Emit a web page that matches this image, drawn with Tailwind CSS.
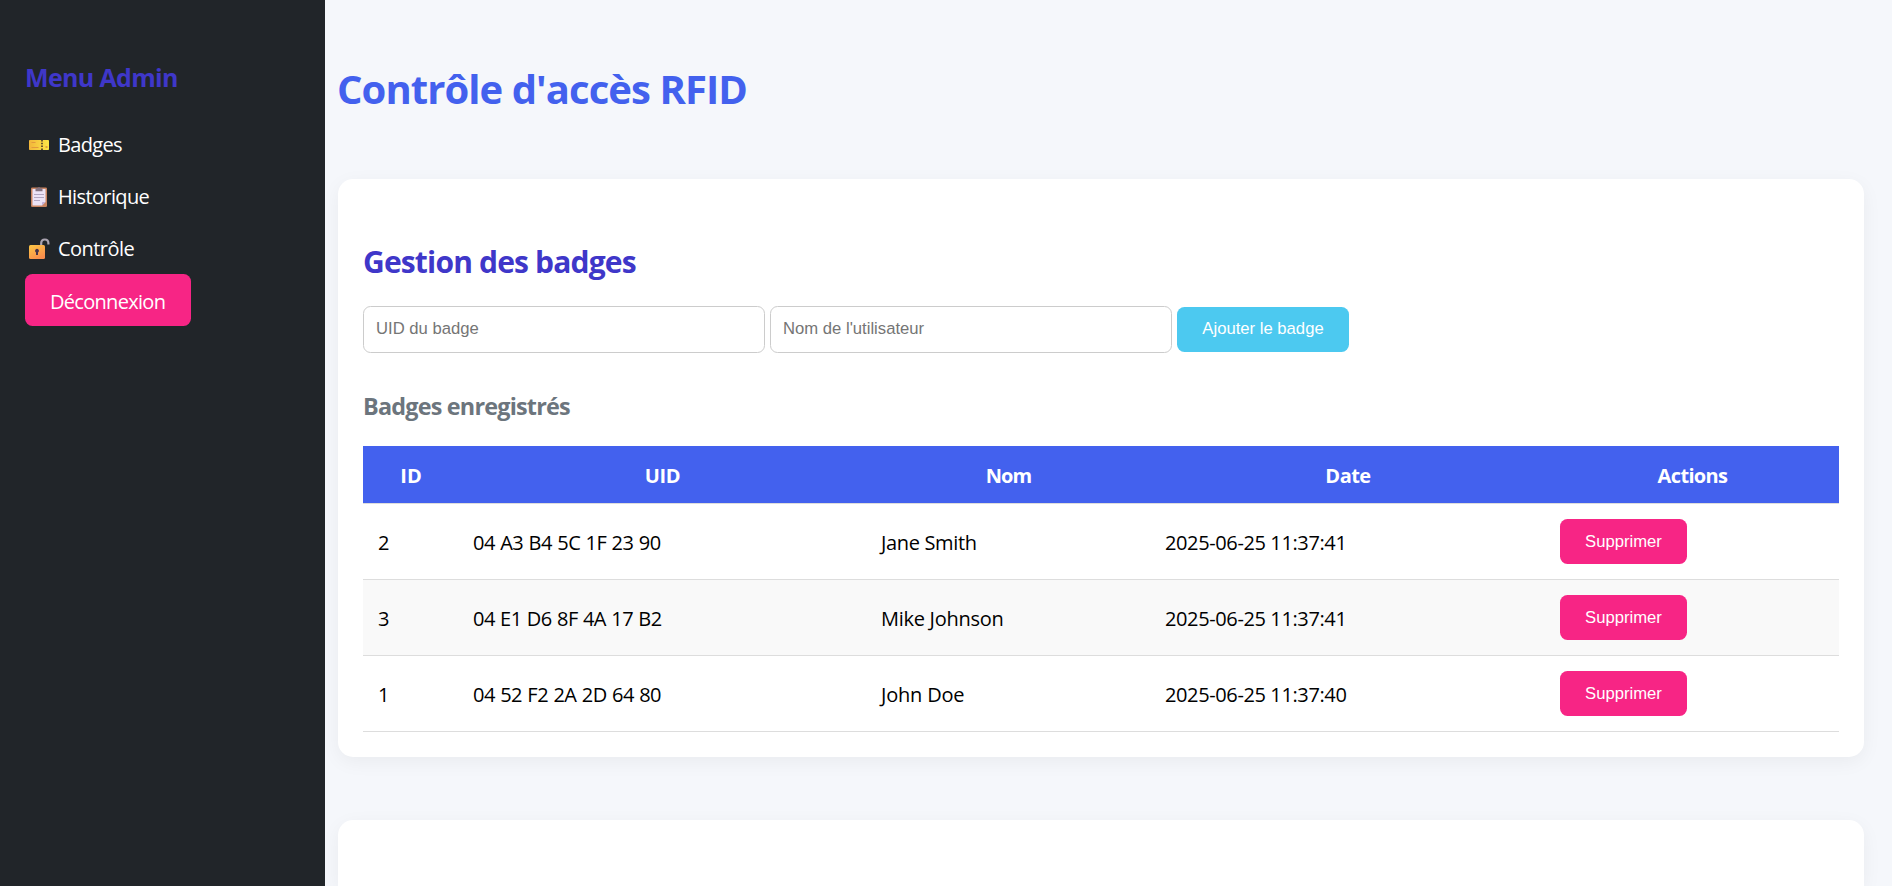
<!DOCTYPE html>
<html lang="fr">
<head>
<meta charset="utf-8">
<title>Contrôle d'accès RFID</title>
<script src="https://cdn.jsdelivr.net/npm/@tailwindcss/browser@4"></script>
</head>
<body class="flex h-screen overflow-hidden bg-[#f5f7fb] font-['Open_Sans',sans-serif] text-[20px] text-black">
<aside class="w-[325px] shrink-0 bg-[#212529] px-[25px] pt-[60px] text-white">
  <h3 class="mb-[24px] text-[25px] leading-[34px] font-bold text-[#3f37c9]"><span class="tracking-[-0.65px]">Menu Admin</span></h3>
  <nav class="flex flex-col leading-[52px]">
    <a class="flex h-[52px] items-center pt-[2px]">
      <svg class="ml-[3px] mr-[8px] size-[22px]" viewBox="0 0 22 22">
        <defs><linearGradient id="tk" x1="0" x2="1"><stop offset="0" stop-color="#f2b63a"/><stop offset="1" stop-color="#fde747"/></linearGradient></defs>
        <path d="M1.8 6h18.4q.8 0 .8.8v8.4q0 .8-.8.8H1.8q-.8 0-.8-.8V6.800q0-.8.8-.8z" fill="url(#tk)"/>
        <path d="M3.500 8.500h4M3.500 13.500h7" stroke="#e39a3c" stroke-width="1"/><path d="M17.500 13h2" stroke="#e39a3c" stroke-width="1.800"/>
        <path d="M14 6v10" stroke="#3b3027" stroke-width="1.500" stroke-dasharray="1.500 1.300"/>
      </svg><span class="tracking-[-0.67px]">Badges</span></a>
    <a class="flex h-[52px] items-center pt-[2px]">
      <svg class="ml-[3px] mr-[8px] size-[22px]" viewBox="0 0 22 22">
        <rect x="3" y="1.500" width="16" height="19.500" rx="1.300" fill="#c98460"/>
        <path d="M4.500 3h13v13L14 19.500H4.500z" fill="#ece3f6"/><path d="M17.500 16h-2.700q-.8 0-.8.8v2.700z" fill="#c3b1d6"/>
        <path d="M7.500 5.300V3q0-.8.8-.8h1.200q.2-1 1.500-1t1.500 1h1.200q.8 0 .8.800v2.300z" fill="#83727f"/>
        <path d="M6 8.500h10M6 11.500h10M6 14.500h6" stroke="#b3a7c2"/>
      </svg><span class="tracking-[-0.63px]">Historique</span></a>
    <a class="flex h-[52px] items-center pt-[2px]">
      <svg class="ml-[3px] mr-[8px] size-[22px]" viewBox="0 0 22 22">
        <defs><linearGradient id="lk" x1="0" y1="0" x2=".6" y2="1"><stop offset="0" stop-color="#fcc844"/><stop offset="1" stop-color="#f98d4c"/></linearGradient></defs>
        <path d="M13.200 8V5.200q0-3.700 3.600-3.700t3.600 3.700V6.500" fill="none" stroke="#aaa3b0" stroke-width="2.200"/>
        <rect x="1" y="7" width="16" height="14" rx="1.500" fill="url(#lk)"/>
        <path d="M9 10.800a2 2 0 0 1 1 3.700V17H8v-2.500a2 2 0 0 1 1-3.700z" fill="#453349"/>
      </svg><span class="tracking-[-0.55px]">Contrôle</span></a>
    <a class="flex h-[52px] w-[166px] items-center rounded-[7.5px] bg-[#f72585] pt-[3px] pl-[25px] leading-[49px]"><span class="whitespace-nowrap tracking-[-0.7px]">Déconnexion</span></a>
  </nav>
</aside>
<main class="min-w-0 flex-1 pr-[28px] pl-[13px] pt-[63px]">
  <h1 class="-ml-px mb-[64px] text-[40px] leading-[52px] font-bold text-[#4361ee]"><span class="tracking-[-0.93px]">Contrôle d'accès RFID</span></h1>
  <section class="h-[578px] rounded-[15px] bg-white px-[25px] pt-[63px] shadow-[0_5px_18.75px_rgba(0,0,0,0.05)]">
    <h2 class="text-[30px] leading-[40px] font-bold text-[#3f37c9]"><span class="tracking-[-0.83px]">Gestion des badges</span></h2>
    <form class="mt-[24px] flex items-center font-['Liberation_Sans',Arial,sans-serif] text-[16.67px]">
      <input class="mr-[5px] h-[47px] w-[402px] rounded-[7.5px] border border-[#ccc] px-[12px] pb-[2px] placeholder:text-[#757575]" placeholder="UID du badge">
      <input class="mr-[5px] h-[47px] w-[402px] rounded-[7.5px] border border-[#ccc] px-[12px] pb-[2px] placeholder:text-[#757575]" placeholder="Nom de l'utilisateur">
      <button type="button" class="h-[45px] w-[172px] rounded-[7.5px] bg-[#4cc9f0] pb-[2px] text-white">Ajouter le badge</button>
    </form>
    <h3 class="mt-[37px] mb-[24px] text-[23.4px] leading-[32px] font-bold text-[#6c757d]"><span class="tracking-[-0.8px]">Badges enregistrés</span></h3>
    <table class="w-[1476px] table-fixed border-separate border-spacing-0 text-left [&_td]:border-b [&_td]:border-[#ddd] [&_th]:border-b [&_th]:border-[#ddd]">
      <colgroup><col class="w-[95px]"><col class="w-[408px]"><col class="w-[284px]"><col class="w-[395px]"><col class="w-[294px]"></colgroup>
      <thead>
        <tr class="h-[58px] bg-[#4361ee] text-center leading-[27px] text-white [&_th]:pt-px [&_th]:pl-px">
          <th>ID</th><th class="tracking-[-0.37px]">UID</th><th class="tracking-[-1px]">Nom</th><th class="tracking-[-0.52px]">Date</th><th class="tracking-[-0.65px]">Actions</th>
        </tr>
      </thead>
      <tbody class="leading-[27px] [&_td]:px-[15px] [&_td:not(:last-child)]:pt-[2px]">
        <tr class="h-[76px]"><td>2</td><td class="tracking-[-0.5px] [word-spacing:0.6px]">04 A3 B4 5C 1F 23 90</td><td class="tracking-[-0.35px]">Jane Smith</td><td class="tracking-[-0.38px]">2025-06-25 11:37:41</td><td><button class="block h-[45px] w-[127px] rounded-[7.5px] bg-[#f72585] pb-[1px] font-['Liberation_Sans',Arial,sans-serif] text-[16.67px] text-white">Supprimer</button></td></tr>
        <tr class="h-[76px] bg-[#f9f9f9]"><td>3</td><td class="tracking-[-0.53px] [word-spacing:0.6px]">04 E1 D6 8F 4A 17 B2</td><td class="tracking-[-0.28px]">Mike Johnson</td><td class="tracking-[-0.38px]">2025-06-25 11:37:41</td><td><button class="block h-[45px] w-[127px] rounded-[7.5px] bg-[#f72585] pb-[1px] font-['Liberation_Sans',Arial,sans-serif] text-[16.67px] text-white">Supprimer</button></td></tr>
        <tr class="h-[76px]"><td>1</td><td class="tracking-[-0.5px] [word-spacing:0.6px]">04 52 F2 2A 2D 64 80</td><td class="tracking-[-0.2px]">John Doe</td><td class="tracking-[-0.38px]">2025-06-25 11:37:40</td><td><button class="block h-[45px] w-[127px] rounded-[7.5px] bg-[#f72585] pb-[1px] font-['Liberation_Sans',Arial,sans-serif] text-[16.67px] text-white">Supprimer</button></td></tr>
      </tbody>
    </table>
  </section>
  <section class="mt-[63px] h-[66px] rounded-t-[15px] bg-white shadow-[0_5px_18.75px_rgba(0,0,0,0.05)]"></section>
</main>
</body>
</html>
